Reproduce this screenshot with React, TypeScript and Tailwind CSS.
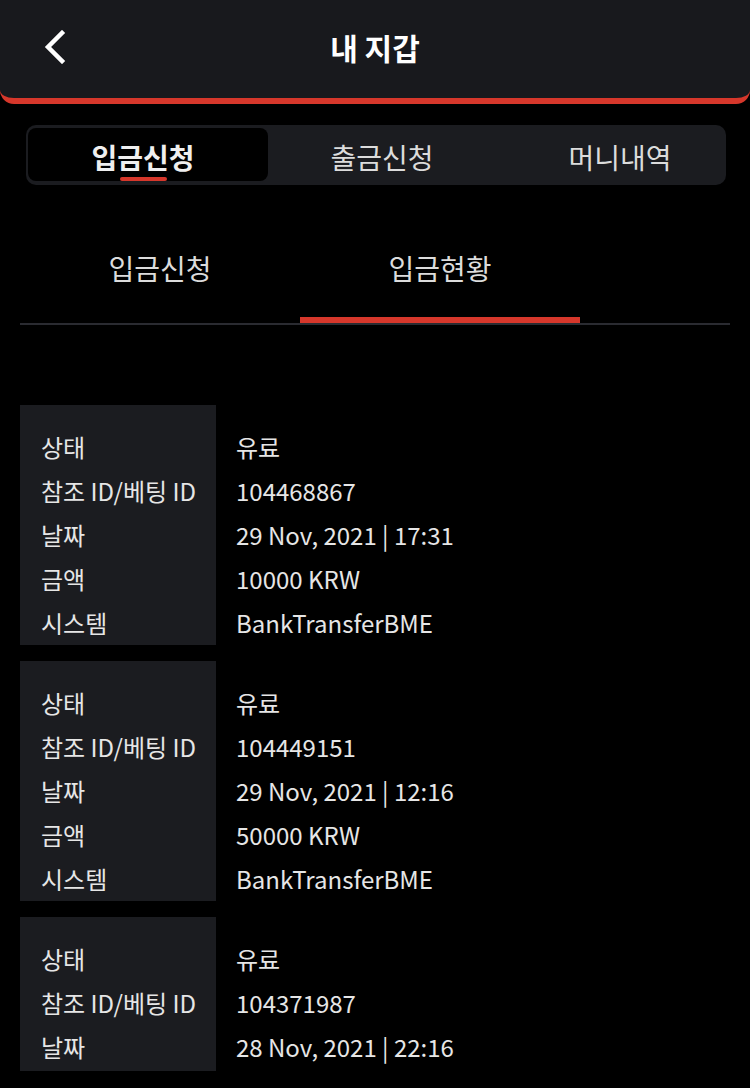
import React from "react";

type Row = { label: string; value: string };

const cards: Row[][] = [
  [
    { label: "상태", value: "유료" },
    { label: "참조 ID/베팅 ID", value: "104468867" },
    { label: "날짜", value: "29 Nov, 2021 | 17:31" },
    { label: "금액", value: "10000 KRW" },
    { label: "시스템", value: "BankTransferBME" },
  ],
  [
    { label: "상태", value: "유료" },
    { label: "참조 ID/베팅 ID", value: "104449151" },
    { label: "날짜", value: "29 Nov, 2021 | 12:16" },
    { label: "금액", value: "50000 KRW" },
    { label: "시스템", value: "BankTransferBME" },
  ],
  [
    { label: "상태", value: "유료" },
    { label: "참조 ID/베팅 ID", value: "104371987" },
    { label: "날짜", value: "28 Nov, 2021 | 22:16" },
  ],
];

export default function App() {
  return (
    <div
      className="w-[750px] h-[1088px] bg-black overflow-hidden text-[#e6e6e6]"
      style={{ fontFamily: '"Noto Sans CJK KR", "Noto Sans", sans-serif' }}
    >
      {/* Header */}
      <header className="h-[104px] bg-[#18191d] rounded-b-[14px] border-b-[6px] border-[#d6372b] grid grid-cols-[100px_1fr_100px] items-center">
        <div className="pl-[44px] pb-[4px] flex items-center">
          <svg width="22" height="34" viewBox="0 0 22 34" fill="none">
            <polyline
              points="18,3 4,17 18,31"
              stroke="#ffffff"
              strokeWidth="4.5"
              strokeLinecap="square"
              strokeLinejoin="miter"
            />
          </svg>
        </div>
        <h1 className="text-center text-[30px] font-bold text-white leading-none pb-[4px]">내 지갑</h1>
        <div />
      </header>

      {/* Segmented control */}
      <div className="mt-[21px] ml-[26px] w-[700px] h-[60px] bg-[#1b1c20] rounded-[10px] pl-[2px] pt-[3px] pb-[4px] flex">
        <div className="relative w-[240px] h-[53px] bg-black rounded-[8px] flex items-center justify-center pr-[10px] pt-[4px]">
          <span className="text-[28px] font-bold text-[#efefef] leading-none">입금신청</span>
          <span className="absolute bottom-0 left-[92px] w-[47px] h-[4px] rounded-full bg-[#d6372b]" />
        </div>
        <div className="w-[228px] flex items-center justify-center pt-[4px]">
          <span className="text-[28px] text-[#dcdcdc] leading-none">출금신청</span>
        </div>
        <div className="flex-1 flex items-center justify-center pl-[18px] pt-[4px]">
          <span className="text-[28px] text-[#dcdcdc] leading-none">머니내역</span>
        </div>
      </div>

      {/* Sub tabs */}
      <div className="mx-[20px] mt-[65px] border-b-2 border-[#2a2b31] flex">
        <div className="w-[280px] h-[73px] flex justify-center">
          <span className="text-[28px] leading-[36px] text-[#dcdcdc]">입금신청</span>
        </div>
        <div className="relative w-[280px] h-[73px] flex justify-center">
          <span className="text-[28px] leading-[36px] text-[#dcdcdc]">입금현황</span>
          <span className="absolute left-0 right-0 bottom-0 h-[6px] bg-[#d6372b]" />
        </div>
      </div>

      {/* List */}
      <div className="mt-[80px] px-[20px] flex flex-col gap-[16px]">
        {cards.map((rows, i) => (
          <div key={i} className="flex shrink-0">
            <div className="w-[196px] bg-[#1b1c20] pl-[21px] pt-[20px] last:pb-0">
              {rows.map((r) => (
                <div key={r.label} className="text-[24px] leading-[44px] text-[#e6e6e6] whitespace-nowrap">
                  {r.label}
                </div>
              ))}
              {i === cards.length - 1 && <div className="h-[2px]" />}
            </div>
            <div className="flex-1 pl-[20px] pt-[20px]">
              {rows.map((r) => (
                <div key={r.label} className="text-[24px] leading-[44px] text-[#e6e6e6] whitespace-nowrap">
                  {r.value}
                </div>
              ))}
            </div>
          </div>
        ))}
      </div>
    </div>
  );
}
